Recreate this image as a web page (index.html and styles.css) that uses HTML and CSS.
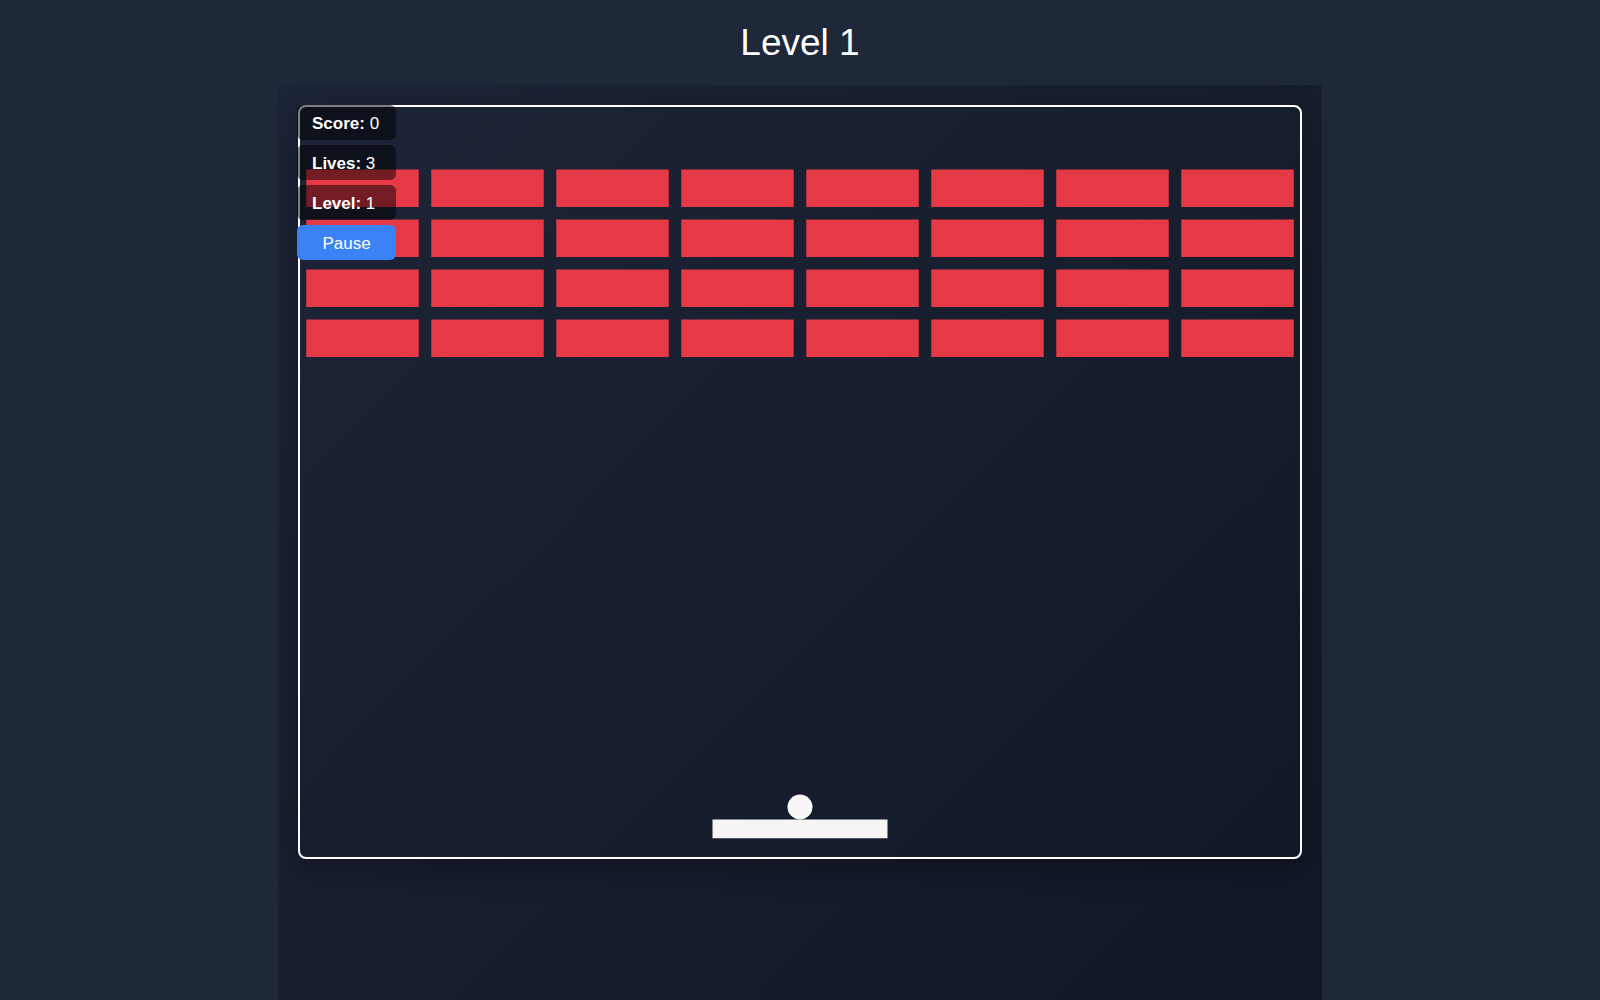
FILE: index.html
```html
<!DOCTYPE html>
<html lang="en">
<head>
<meta charset="utf-8">
<title>Breakout</title>
<link rel="stylesheet" href="styles.css">
</head>
<body>
  <h1 class="title">Level 1</h1>
  <main class="container">
    <div class="stage">
      <svg class="board" viewBox="0 0 800 600" width="1000" height="750" xmlns="http://www.w3.org/2000/svg">
        <g fill="#e63946">
          <rect x="5" y="50" width="90" height="30"/><rect x="105" y="50" width="90" height="30"/><rect x="205" y="50" width="90" height="30"/><rect x="305" y="50" width="90" height="30"/><rect x="405" y="50" width="90" height="30"/><rect x="505" y="50" width="90" height="30"/><rect x="605" y="50" width="90" height="30"/><rect x="705" y="50" width="90" height="30"/>
          <rect x="5" y="90" width="90" height="30"/><rect x="105" y="90" width="90" height="30"/><rect x="205" y="90" width="90" height="30"/><rect x="305" y="90" width="90" height="30"/><rect x="405" y="90" width="90" height="30"/><rect x="505" y="90" width="90" height="30"/><rect x="605" y="90" width="90" height="30"/><rect x="705" y="90" width="90" height="30"/>
          <rect x="5" y="130" width="90" height="30"/><rect x="105" y="130" width="90" height="30"/><rect x="205" y="130" width="90" height="30"/><rect x="305" y="130" width="90" height="30"/><rect x="405" y="130" width="90" height="30"/><rect x="505" y="130" width="90" height="30"/><rect x="605" y="130" width="90" height="30"/><rect x="705" y="130" width="90" height="30"/>
          <rect x="5" y="170" width="90" height="30"/><rect x="105" y="170" width="90" height="30"/><rect x="205" y="170" width="90" height="30"/><rect x="305" y="170" width="90" height="30"/><rect x="405" y="170" width="90" height="30"/><rect x="505" y="170" width="90" height="30"/><rect x="605" y="170" width="90" height="30"/><rect x="705" y="170" width="90" height="30"/>
        </g>
        <circle cx="400" cy="560" r="10" fill="#f8f9f6"/>
        <rect x="330" y="570" width="140" height="15" fill="#f5f5f3"/>
      </svg>
      <div class="hud">
        <div class="stat"><b>Score:</b> 0</div>
        <div class="stat"><b>Lives:</b> 3</div>
        <div class="stat"><b>Level:</b> 1</div>
        <button class="pause" type="button">Pause</button>
      </div>
    </div>
  </main>
</body>
</html>
```

FILE: styles.css
```css
* {
  box-sizing: border-box;
}

html, body {
  margin: 0;
  height: 100%;
}

body {
  background: #1f2838;
  font-family: "Liberation Sans", Arial, sans-serif;
  color: #ffffff;
  overflow: hidden;
}

.title {
  margin: 0 0 22px;
  padding-top: 22px;
  font-size: 37px;
  line-height: 41px;
  font-weight: normal;
  text-align: center;
  color: #ffffff;
}

.container {
  width: 1044px;
  margin: 0 auto;
  padding: 20px;
  min-height: 915px;
  background: linear-gradient(135deg, #1c2437 0%, #171e2e 50%, #111726 100%);
}

.stage {
  position: relative;
  width: 1004px;
}

.board {
  display: block;
  width: 1004px;
  height: 754px;
  border: 2px solid #ffffff;
  border-radius: 8px;
  box-shadow: 0 10px 30px rgba(0, 0, 0, 0.3);
}

.hud {
  position: absolute;
  top: 0;
  left: -1px;
  display: flex;
  flex-direction: column;
  gap: 5px;
}

.stat {
  width: 99px;
  padding: 9px 14px 7px 15px;
  font-size: 17px;
  line-height: 19px;
  background: rgba(0, 0, 0, 0.5);
  border-radius: 6px;
  white-space: nowrap;
}

.stat b {
  font-weight: bold;
}

.pause {
  width: 99px;
  height: 35px;
  padding: 2px 0 0;
  border: none;
  border-radius: 6px;
  background: #3b82f6;
  color: #ffffff;
  font-family: "Liberation Sans", Arial, sans-serif;
  font-size: 17px;
  line-height: 19px;
  cursor: pointer;
}
```
